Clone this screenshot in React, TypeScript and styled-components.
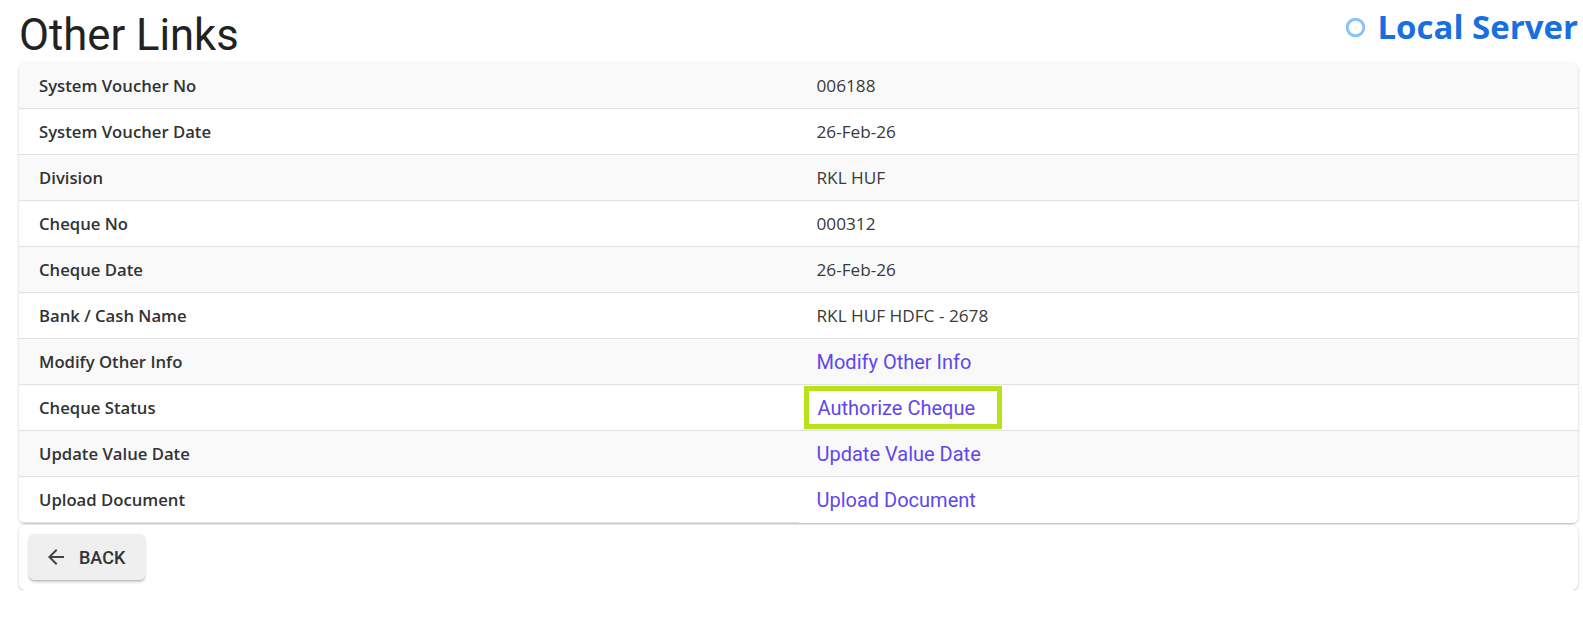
import styled, { createGlobalStyle } from 'styled-components';

const GlobalStyle = createGlobalStyle`
  html, body {
    margin: 0;
    padding: 0;
    background: #fff;
  }
  body {
    font-family: 'Open Sans', 'Liberation Sans', sans-serif;
  }
`;

const Page = styled.div`
  padding: 0 5px 0 19px;
`;

const Header = styled.div`
  display: flex;
  justify-content: space-between;
  align-items: flex-start;
  height: 63px;
`;

const Title = styled.h1`
  margin: 11px 0 0 0;
  font-family: Roboto, 'Liberation Sans', sans-serif;
  font-weight: 400;
  font-size: 43.6px;
  line-height: 50px;
  color: #222;
`;

const ServerTag = styled.div`
  display: flex;
  align-items: center;
  gap: 11px;
  margin-top: 2px;
  font-family: 'Open Sans', 'Liberation Sans', sans-serif;
  font-weight: 700;
  font-size: 33px;
  line-height: 50px;
  color: #1a6fe0;
`;

const Card = styled.div`
  background: #fff;
  border-radius: 6px;
  box-shadow: 0 1px 3px rgba(0, 0, 0, 0.2), 0 1px 1px rgba(0, 0, 0, 0.08);
  overflow: hidden;
`;

const Table = styled.div`
  display: grid;
  grid-template-columns: 1fr 1fr;
`;

const Row = styled.div<{ $shade: boolean }>`
  display: contents;
  & > div {
    background: ${(p) => (p.$shade ? '#f9f9f9' : '#fff')};
  }
`;

const Cell = styled.div<{ $last?: boolean; $value?: boolean }>`
  height: 46px;
  box-sizing: border-box;
  display: flex;
  align-items: center;
  padding-left: ${(p) => (p.$value ? '18px' : '20px')};
  border-bottom: ${(p) => (p.$last && p.$value ? 'none' : '1px solid #e0e0e0')};
  font-size: 17.2px;
  color: #3a3a3a;
`;

const Label = styled(Cell)`
  font-size: 16.7px;
  font-weight: 600;
  color: #333;
`;

const ActionLink = styled.a<{ $focus?: boolean }>`
  font-family: Roboto, 'Liberation Sans', sans-serif;
  font-size: 20px;
  color: #6146ee;
  text-decoration: none;
  cursor: pointer;
  ${(p) =>
    p.$focus &&
    `
    margin-left: -13px;
    border: 5px solid #b6e31c;
    padding: 0 0 0 9px;
    width: 198px;
    height: 43px;
    box-sizing: border-box;
    display: flex;
    align-items: center;
  `}
`;

const Footer = styled(Card)`
  margin-top: 2px;
  padding: 9px 10px 10px;
`;

const BackButton = styled.button`
  display: flex;
  align-items: center;
  gap: 11px;
  height: 46px;
  padding: 0 20px 0 15px;
  border: none;
  border-radius: 5px;
  background: #efefef;
  box-shadow: 0 2px 3px rgba(0, 0, 0, 0.2), 0 1px 1px rgba(0, 0, 0, 0.1);
  font-family: Roboto, 'Liberation Sans', sans-serif;
  font-weight: 500;
  font-size: 18px;
  color: #333;
  cursor: pointer;
`;

type Item = { label: string; value: string; link?: boolean; focus?: boolean };

const items: Item[] = [
  { label: 'System Voucher No', value: '006188' },
  { label: 'System Voucher Date', value: '26-Feb-26' },
  { label: 'Division', value: 'RKL HUF' },
  { label: 'Cheque No', value: '000312' },
  { label: 'Cheque Date', value: '26-Feb-26' },
  { label: 'Bank / Cash Name', value: 'RKL HUF HDFC - 2678' },
  { label: 'Modify Other Info', value: 'Modify Other Info', link: true },
  { label: 'Cheque Status', value: 'Authorize Cheque', link: true, focus: true },
  { label: 'Update Value Date', value: 'Update Value Date', link: true },
  { label: 'Upload Document', value: 'Upload Document', link: true },
];

export default function App() {
  return (
    <Page>
      <GlobalStyle />
      <Header>
        <Title>Other Links</Title>
        <ServerTag>
          <svg width="21" height="21" viewBox="0 0 22 22">
            <circle cx="11" cy="11" r="8.7" fill="none" stroke="#8cc0f8" strokeWidth="3" />
          </svg>
          Local Server
        </ServerTag>
      </Header>
      <Card>
        <Table>
          {items.map((item, i) => {
            const last = i === items.length - 1;
            return (
              <Row key={item.label} $shade={i % 2 === 0}>
                <Label $last={last}>{item.label}</Label>
                <Cell $value $last={last}>
                  {item.link ? (
                    <ActionLink $focus={item.focus}>{item.value}</ActionLink>
                  ) : (
                    item.value
                  )}
                </Cell>
              </Row>
            );
          })}
        </Table>
      </Card>
      <Footer>
        <BackButton>
          <svg width="24" height="24" viewBox="0 0 24 24" fill="#444">
            <path d="M20 11H7.83l5.59-5.59L12 4l-8 8 8 8 1.41-1.41L7.83 13H20v-2z" />
          </svg>
          BACK
        </BackButton>
      </Footer>
    </Page>
  );
}
